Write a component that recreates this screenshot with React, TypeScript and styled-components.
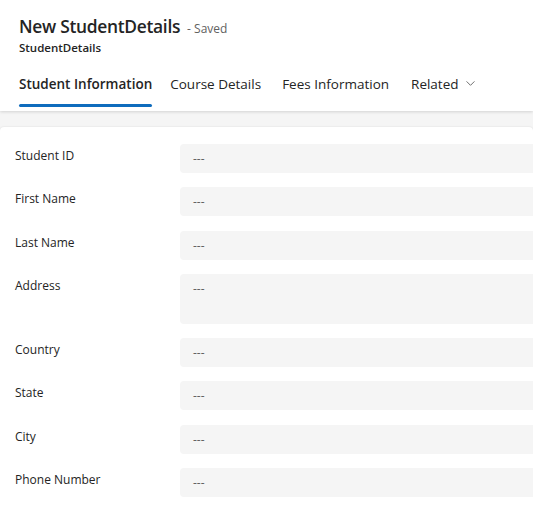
import React from "react";
import styled, { createGlobalStyle } from "styled-components";

const Global = createGlobalStyle`
  html, body { margin: 0; padding: 0; background: #f5f5f5; }
  body { font-family: "Open Sans", "Noto Sans", sans-serif; color: #242424; }
  * { box-sizing: border-box; }
`;

const Page = styled.div`
  width: 533px;
  height: 510px;
  overflow: hidden;
  background: #f5f5f5;
`;

const Header = styled.header`
  background: #fff;
  height: 111px;
  padding: 12px 0 0 19px;
  box-shadow: 0 1px 3px rgba(0, 0, 0, 0.14);
  position: relative;
  z-index: 1;
`;

const TitleRow = styled.div`
  display: flex;
  align-items: baseline;
  gap: 7px;
  height: 28px;
`;

const Title = styled.h1`
  margin: 0;
  font-size: 17.4px;
  letter-spacing: -0.3px;
  font-weight: 600;
  line-height: 28px;
`;

const Status = styled.span`
  font-size: 12px;
  color: #616161;
`;

const Entity = styled.div`
  font-size: 11.5px;
  font-weight: 600;
  line-height: 16px;
`;

const Tabs = styled.nav`
  display: flex;
  margin-top: 5px;
  height: 46px;
`;

const Tab = styled.div<{ $active?: boolean; $gap: number }>`
  position: relative;
  display: flex;
  align-items: center;
  gap: 6px;
  height: 100%;
  margin-right: ${(p) => p.$gap}px;
  font-size: 13.5px;
  font-weight: ${(p) => (p.$active ? 600 : 400)};
  color: #242424;
  padding-bottom: 1px;
  &::after {
    content: "";
    display: ${(p) => (p.$active ? "block" : "none")};
    position: absolute;
    left: 0;
    right: 0;
    bottom: 0;
    height: 3px;
    border-radius: 2px;
    background: #0f6cbd;
  }
`;

const Card = styled.section`
  margin-top: 16px;
  background: #fff;
  border-radius: 4px;
  box-shadow: 0 0 2px rgba(0, 0, 0, 0.12);
  padding: 17px 0 20px 15px;
  display: flex;
  flex-direction: column;
  gap: 14.3px;
`;

const Row = styled.div`
  display: grid;
  grid-template-columns: 165px 1fr;
`;

const Label = styled.label`
  font-size: 12px;
  line-height: 18px;
  padding-top: 3px;
  color: #242424;
`;

const Field = styled.div<{ $tall?: boolean }>`
  height: ${(p) => (p.$tall ? "50px" : "29px")};
  background: #f5f5f5;
  border-radius: 4px 0 0 4px;
  padding: 6px 13px;
  font-size: 12px;
  line-height: 17px;
  color: #616161;
`;

const fields: { label: string; tall?: boolean }[] = [
  { label: "Student ID" },
  { label: "First Name" },
  { label: "Last Name" },
  { label: "Address", tall: true },
  { label: "Country" },
  { label: "State" },
  { label: "City" },
  { label: "Phone Number" },
];

const tabs = [
  { label: "Student Information", active: true, gap: 18 },
  { label: "Course Details", gap: 21 },
  { label: "Fees Information", gap: 22 },
];

const Chevron = () => (
  <svg width="11" height="11" viewBox="0 0 12 12" fill="none">
    <path d="M2 4l4 4 4-4" stroke="#616161" strokeWidth="1" strokeLinecap="round" strokeLinejoin="round" />
  </svg>
);

export default function App() {
  return (
    <Page>
      <Global />
      <Header>
        <TitleRow>
          <Title>New StudentDetails</Title>
          <Status>- Saved</Status>
        </TitleRow>
        <Entity>StudentDetails</Entity>
        <Tabs>
          {tabs.map((t) => (
            <Tab key={t.label} $active={t.active} $gap={t.gap}>
              {t.label}
            </Tab>
          ))}
          <Tab $gap={0}>
            Related <Chevron />
          </Tab>
        </Tabs>
      </Header>
      <Card>
        {fields.map((f) => (
          <Row key={f.label}>
            <Label>{f.label}</Label>
            <Field $tall={f.tall}>---</Field>
          </Row>
        ))}
      </Card>
    </Page>
  );
}
